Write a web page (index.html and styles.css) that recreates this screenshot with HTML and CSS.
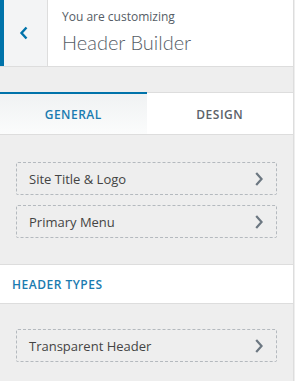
FILE: index.html
```html
<!DOCTYPE html>
<html lang="en">
<head>
    <meta charset="UTF-8">
    <meta name="viewport" content="width=device-width, initial-scale=1.0">
    <title>Header Builder</title>
    <link rel="stylesheet" href="styles.css">
</head>
<body>
    <div class="panel">
        <div class="panel-head">
            <button class="back-btn" aria-label="Back">
                <svg width="10" height="14" viewBox="0 0 10 14">
                    <path d="M7.5 1.5 L2.5 7 L7.5 12.5" fill="none" stroke="#0073aa" stroke-width="2.4"/>
                </svg>
            </button>
            <div class="head-title">
                <span class="head-sub">You are customizing</span>
                <h1>Header Builder</h1>
            </div>
        </div>

        <div class="spacer"></div>

        <div class="tabs">
            <div class="tab active">GENERAL</div>
            <div class="tab">DESIGN</div>
        </div>

        <div class="group">
            <div class="item">
                <span>Site Title &amp; Logo</span>
                <svg class="arrow" width="8" height="14" viewBox="0 0 8 14">
                    <path d="M1.2 1 L6.6 7 L1.2 13" fill="none" stroke="#6c7781" stroke-width="2.2"/>
                </svg>
            </div>
            <div class="item">
                <span>Primary Menu</span>
                <svg class="arrow" width="8" height="14" viewBox="0 0 8 14">
                    <path d="M1.2 1 L6.6 7 L1.2 13" fill="none" stroke="#6c7781" stroke-width="2.2"/>
                </svg>
            </div>
        </div>

        <div class="section-title">HEADER TYPES</div>

        <div class="group group-after-title">
            <div class="item">
                <span>Transparent Header</span>
                <svg class="arrow" width="8" height="14" viewBox="0 0 8 14">
                    <path d="M1.2 1 L6.6 7 L1.2 13" fill="none" stroke="#6c7781" stroke-width="2.2"/>
                </svg>
            </div>
        </div>
    </div>
</body>
</html>
```

FILE: styles.css
```css
* {
    margin: 0;
    padding: 0;
    box-sizing: border-box;
}

body {
    font-family: "Open Sans", "Noto Sans", sans-serif;
    background: #eeeeee;
    width: 295px;
    height: 381px;
    overflow: hidden;
}

.panel {
    width: 294px;
    min-height: 381px;
    background: #eeeeee;
    border-right: 1px solid #dddddd;
}

.panel-head {
    display: flex;
    height: 67px;
    background: #ffffff;
    border-bottom: 1px solid #dddddd;
}

.back-btn {
    width: 48px;
    height: 66px;
    background: #f3f4f5;
    border: none;
    border-left: 4px solid #0073aa;
    border-right: 1px solid #dddddd;
    display: flex;
    align-items: center;
    justify-content: center;
    padding-right: 4px;
}

.head-title {
    padding: 8px 0 0 14px;
    color: #555d66;
}

.head-sub {
    display: block;
    font-size: 12px;
    line-height: 18px;
}

.head-title h1 {
    font-family: Lato, "Open Sans", sans-serif;
    font-size: 20px;
    font-weight: 300;
    line-height: 26px;
    margin-top: 3px;
    color: #555d66;
}

.spacer {
    height: 25px;
}

.tabs {
    display: flex;
    height: 43px;
    border-top: 1px solid #dddddd;
    border-bottom: 1px solid #dddddd;
    background: #ffffff;
}

.tab {
    flex: 1;
    display: flex;
    align-items: center;
    justify-content: center;
    font-size: 12px;
    font-weight: 600;
    letter-spacing: 0.5px;
    color: #5b626a;
    border-top: 2px solid transparent;
    margin-top: -1px;
}

.tab.active {
    color: #1a7bb0;
    border-top-color: #0073aa;
    background: linear-gradient(to bottom, #f0f2f3, #fbfcfc);
}

.group {
    padding: 27px 16px 26px;
    display: flex;
    flex-direction: column;
    gap: 10px;
}

.group-after-title {
    padding-top: 25px;
}

.item {
    height: 33px;
    border: 1px dashed #b4b9be;
    border-radius: 2px;
    display: flex;
    align-items: center;
    justify-content: space-between;
    padding: 0 13px 0 12px;
    font-size: 13px;
    color: #444444;
}

.section-title {
    height: 40px;
    background: #ffffff;
    border-top: 1px solid #dddddd;
    border-bottom: 1px solid #dddddd;
    display: flex;
    align-items: center;
    padding-left: 12px;
    font-size: 12px;
    font-weight: 600;
    letter-spacing: 0.5px;
    color: #1a7bb0;
}
```
